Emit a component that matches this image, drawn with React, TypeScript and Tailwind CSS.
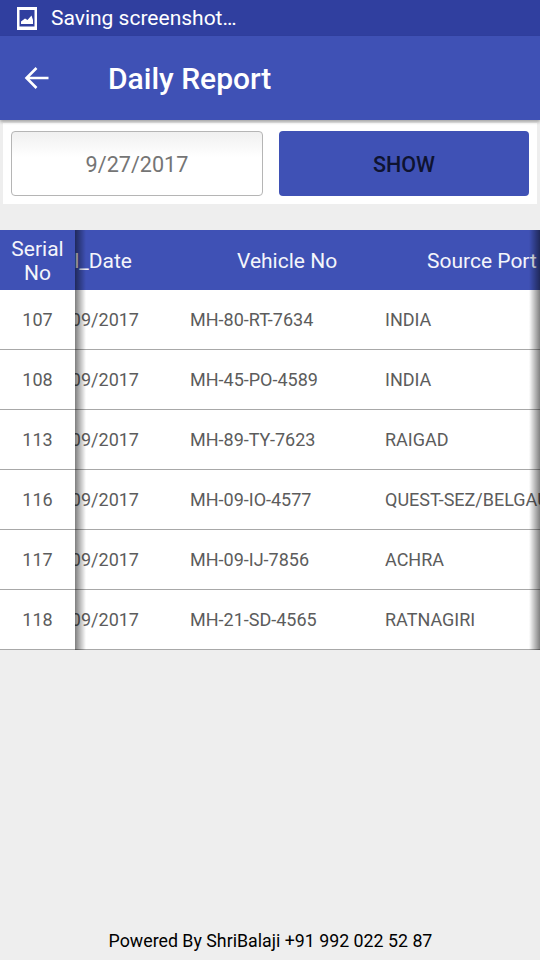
const rows = [
  ["107", "27/09/2017", "MH-80-RT-7634", "INDIA"],
  ["108", "27/09/2017", "MH-45-PO-4589", "INDIA"],
  ["113", "27/09/2017", "MH-89-TY-7623", "RAIGAD"],
  ["116", "27/09/2017", "MH-09-IO-4577", "QUEST-SEZ/BELGAUM"],
  ["117", "27/09/2017", "MH-09-IJ-7856", "ACHRA"],
  ["118", "27/09/2017", "MH-21-SD-4565", "RATNAGIRI"],
];

export default function App() {
  return (
    <div className="flex h-[960px] w-[540px] flex-col overflow-hidden bg-[#eeeeee] font-['Roboto',sans-serif]">
      <div className="flex h-9 shrink-0 items-center bg-[#303f9f] pl-[17px] text-white">
        <svg width="20" height="23" viewBox="0 0 20 23" className="shrink-0">
          <path d="M0 0h20v23H0z M2.500 3v16.500h15V3z" fill="#fff" fillRule="evenodd" />
          <path d="M4 17v-2.500l4-3 2.500 1.500 4-4.500 1.500 4.500v4z" fill="#fff" />
        </svg>
        <span className="ml-[14px] text-[21px] leading-none">Saving screenshot…</span>
      </div>
      <div className="z-10 flex h-[84px] shrink-0 items-center bg-[#3f51b5] pl-6 text-white shadow-[0_2px_3px_rgba(0,0,0,0.3)]">
        <svg width="25" height="24" viewBox="0 0 25 24" fill="none" stroke="#fff" strokeWidth="2.600" className="shrink-0">
          <path d="M24.500 12H2.500M12.500 2 2.500 12l10 10" />
        </svg>
        <span className="ml-[59px] pt-0.5 text-[30px] font-medium leading-none">Daily Report</span>
      </div>

      <div className="mx-[3px] mt-[3px] flex h-[81px] shrink-0 gap-4 bg-white px-2 pt-2">
        <div className="flex h-[65px] flex-1 items-center justify-center rounded-[4px] border border-[#b5b5b5] bg-gradient-to-b from-[#f0f0f0] to-white to-40% pt-1 text-[21.6px] text-[#757575]">
          9/27/2017
        </div>
        <button className="h-[65px] flex-1 rounded-[4px] bg-[#3f51b5] pt-1 text-[21.5px] font-medium text-[#0e1330]">SHOW</button>
      </div>

      <div className="relative mt-[26px] shrink-0">
        <div className="flex h-[60px] items-center bg-[#3f51b5] pt-0.5 text-[21px] text-[#f4f5fb]">
          <div className="w-[75px] shrink-0 text-center leading-6">
            Serial
            <br />
            No
          </div>
          <div className="flex w-[57px] shrink-0 justify-end overflow-hidden whitespace-nowrap pt-0.5">Arrival_Date</div>
          <div className="ml-[105px] w-[190px] shrink-0 whitespace-nowrap pt-0.5">Vehicle No</div>
          <div className="whitespace-nowrap pt-0.5">Source Port</div>
        </div>
        {rows.map((r) => (
          <div key={r[0]} className="flex h-[60px] items-center border-b border-[#a8a8a8] bg-white text-[18px] text-[#5c5c5c]">
            <div className="flex h-full w-[75px] shrink-0 items-center justify-center pb-px">{r[0]}</div>
            <div className="flex w-[64px] shrink-0 justify-end overflow-hidden whitespace-nowrap">{r[1]}</div>
            <div className="ml-[51px] w-[195px] shrink-0 whitespace-nowrap">{r[2]}</div>
            <div className="w-[155px] overflow-hidden whitespace-nowrap">{r[3]}</div>
          </div>
        ))}
        <div className="absolute bottom-0 left-[75px] top-0 w-[11px] bg-gradient-to-r from-[rgba(0,0,0,0.5)] to-transparent" />
        <div className="absolute bottom-0 right-0 top-0 w-[11px] bg-gradient-to-l from-[rgba(0,0,0,0.5)] to-transparent" />
      </div>

      <div className="mt-auto pb-[9px] pl-px text-center text-[17.8px] leading-[21px] text-black">Powered By ShriBalaji +91 992 022 52 87</div>
    </div>
  );
}
